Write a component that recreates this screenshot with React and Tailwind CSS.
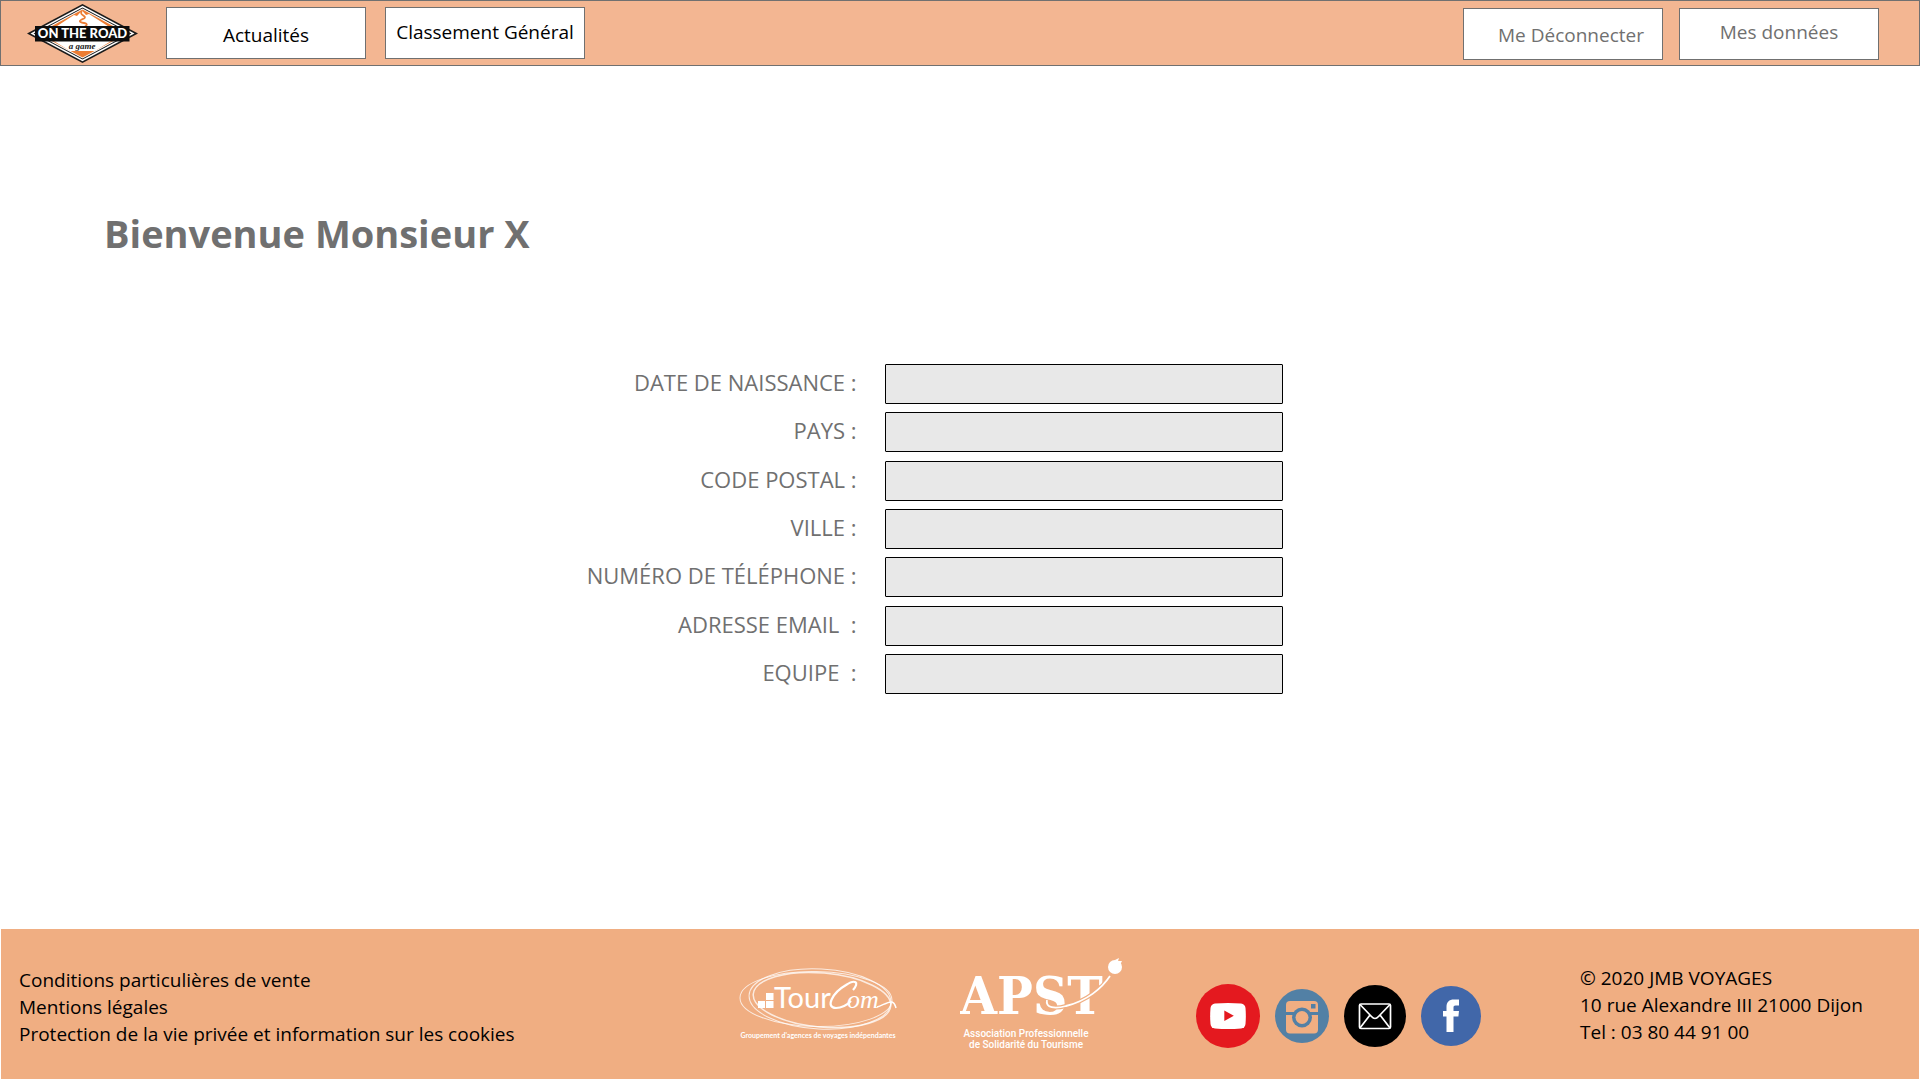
const FIELDS = [
  { id: "birth", label: "DATE DE NAISSANCE :" },
  { id: "country", label: "PAYS :" },
  { id: "zip", label: "CODE POSTAL :" },
  { id: "city", label: "VILLE :" },
  { id: "phone", label: "NUMÉRO DE TÉLÉPHONE :" },
  { id: "email", label: "ADRESSE EMAIL\u00a0 :" },
  { id: "team", label: "EQUIPE\u00a0 :" },
];

function RoadLogo() {
  return (
    <svg width="112" height="60" viewBox="0 0 112 60" role="img" aria-label="On the road, a game">
      <polygon points="55.5,0 111,29.5 55.5,59 0,29.5" fill="#1a1a1a" />
      <polygon points="55.5,1.7 107.5,29.5 55.5,57.3 3.5,29.5" fill="#fff" />
      <polygon points="55.5,3.4 104.5,29.5 55.5,55.6 6.5,29.5" fill="#1a1a1a" />
      <polygon points="55.5,4.4 102.5,29.5 55.5,54.6 8.5,29.5" fill="#fff" />
      <polygon points="55.5,5.5 100,29.5 55.5,53.5 11,29.5" fill="#ec7d34" />
      <polygon points="24,26 47,11 50,12 55,6.5 59,11 62,10 87,26" fill="#fff" />
      <polygon points="22,34 89,34 68,47 43,47" fill="#fff" />
      <path d="M55 7 C51 11 61 12 57 14.500 C52 16.500 51 18 57 19 C62 20 60 22 53 25" fill="none" stroke="#ec7d34" strokeWidth="1.800" />
      <rect x="8" y="22" width="94.500" height="15.500" fill="#0c0c0c" />
      <text x="55.500" y="34" textAnchor="middle" fontFamily="Lato, sans-serif" fontWeight="900" fontSize="13" fill="#fff">ON THE ROAD</text>
      <text x="55" y="44.500" textAnchor="middle" fontFamily="'Liberation Serif', serif" fontStyle="italic" fontWeight="700" fontSize="9" fill="#1a1a1a">a game</text>
    </svg>
  );
}

function TourComLogo() {
  return (
    <svg width="160" height="76" viewBox="0 0 160 76" fill="none" role="img" aria-label="TourCom, Groupement d'agences de voyages indépendantes">
      <g stroke="#fff" strokeOpacity=".75">
        <ellipse cx="77" cy="32" rx="76" ry="27.500" transform="rotate(1 77 32)" />
        <ellipse cx="81" cy="32" rx="71" ry="30" transform="rotate(3 81 32)" />
        <ellipse cx="83" cy="33" rx="69" ry="27" transform="rotate(5 83 33)" strokeWidth="1.500" />
      </g>
      <path d="M19 34h7v7h-7zM27 34h7.500v7h-7.500zM27 26h7.500v7h-7.500z" fill="#fff" />
      <text x="35" y="41" fontFamily="Lato, sans-serif" fontSize="29" fill="#fff">Tour</text>
      <path d="M114 23 C121 15 116 12 107 18 C93 26 86 41 97 41 C103 41 108 38 112 34" stroke="#fff" strokeWidth="2.200" />
      <text x="108" y="41" fontFamily="'Liberation Serif', serif" fontStyle="italic" fontSize="26" fill="#fff">om</text>
      <path d="M138 40 C143 39 149 34 153 35 C156 36 156 38 157 41" stroke="#fff" strokeWidth="1.500" />
      <text x="79" y="71" textAnchor="middle" fontFamily="Lato, sans-serif" fontWeight="700" fontSize="7" fill="#fff">Groupement d'agences de voyages indépendantes</text>
    </svg>
  );
}

function ApstLogo() {
  return (
    <svg width="164" height="94" viewBox="0 0 164 94" fill="#fff" role="img" aria-label="APST, Association Professionnelle de Solidarité du Tourisme">
      <text x="0" y="57" fontFamily="'DejaVu Serif Condensed', 'DejaVu Serif', serif" fontWeight="700" fontSize="53">APST</text>
      <path d="M87 43 C85 51 95 52 106 49 C127 44 142 31 150 19" fill="none" stroke="#f0ae82" strokeWidth="4" />
      <path d="M87 43 C85 51 95 52 106 49 C127 44 142 31 150 19" fill="none" stroke="#fff" strokeWidth="1.800" />
      <circle cx="155" cy="10" r="7" />
      <path d="M155 3l4-2-1 3 4 0-2 4z" />
      <text x="66" y="80" textAnchor="middle" fontFamily="Roboto, sans-serif" fontWeight="500" fontSize="10">Association Professionnelle</text>
      <text x="66" y="91" textAnchor="middle" fontFamily="Roboto, sans-serif" fontWeight="500" fontSize="10">de Solidarité du Tourisme</text>
    </svg>
  );
}

function YoutubeIcon() {
  return (
    <svg width="64" height="64" viewBox="0 0 64 64">
      <circle cx="32" cy="32" r="32" fill="#e4191f" />
      <path d="M19 19.500 Q32 18.500 45 19.500 Q49 20 49.500 24 Q50.200 32 49.500 40 Q49 44 45 44.500 Q32 45.500 19 44.500 Q15 44 14.500 40 Q13.800 32 14.500 24 Q15 20 19 19.500Z" fill="#fff" />
      <path d="M28.300 26.500v10.500l9.500-5.200z" fill="#e4191f" />
    </svg>
  );
}

function InstagramIcon() {
  return (
    <svg width="54" height="54" viewBox="0 0 54 54">
      <circle cx="27" cy="27" r="27" fill="#5280a5" />
      <rect x="11" y="12" width="32" height="32.500" rx="4" fill="#f0ae82" />
      <path d="M11 24.500h32" stroke="#5280a5" strokeWidth="3" />
      <circle cx="27" cy="28.500" r="10" fill="#5280a5" />
      <circle cx="27" cy="28.500" r="6.500" fill="#f0ae82" />
      <rect x="36" y="15" width="4.500" height="4.500" fill="#5280a5" />
    </svg>
  );
}

function MailIcon() {
  return (
    <svg width="62" height="62" viewBox="0 0 62 62">
      <circle cx="31" cy="31" r="31" fill="#000" />
      <g fill="none" stroke="#fff" strokeWidth="1.700" strokeLinejoin="round">
        <rect x="15.500" y="19" width="31" height="24.500" rx="1.500" />
        <path d="M16 19.500 L27.500 31.500 Q31 35.500 34.500 31.500 L46 19.500M16 43 L26 30M46 43 L36 30" />
      </g>
    </svg>
  );
}

function FacebookIcon() {
  return (
    <svg width="60" height="60" viewBox="0 0 60 60">
      <circle cx="30" cy="30" r="30" fill="#4167a9" />
      <path d="M25.500 46V30.500H22V25h3.500v-4c0-5 2.500-7.500 7.500-7.500h5v6h-3.500c-1.500 0-2 .7-2 2V25h5.500l-.6 5.500h-4.900V46z" fill="#fff" />
    </svg>
  );
}

const SOCIALS = [
  { name: "YouTube", Icon: YoutubeIcon },
  { name: "Instagram", Icon: InstagramIcon },
  { name: "E-mail", Icon: MailIcon },
  { name: "Facebook", Icon: FacebookIcon },
];

const navButton = "flex h-[52px] w-[200px] items-center justify-center border border-[#707070] bg-white whitespace-nowrap";

export default function App() {
  return (
    <div className="flex min-h-screen flex-col bg-white font-['Open_Sans',sans-serif] text-[19px] leading-[27px] text-black">
      <header className="flex items-start justify-between border border-[#707070] bg-[#f3b692] pt-[6px] pr-10 pb-[5px] pl-[26px]">
        <nav className="flex items-start">
          <a href="#accueil" className="-mt-[3px] mr-[27px] -mb-1 block">
            <RoadLogo />
          </a>
          <div className="flex gap-[19px]">
            <button type="button" className={`${navButton} pt-1`}>Actualités</button>
            <button type="button" className={`${navButton} pb-0.5`}>Classement Général</button>
          </div>
        </nav>
        <div className="mt-px flex gap-4 text-[#707070]">
          <button type="button" className={`${navButton} pt-0.5 pl-4`}>Me Déconnecter</button>
          <button type="button" className={`${navButton} pb-1`}>Mes données</button>
        </div>
      </header>

      <main className="flex-1">
        <h1 className="mt-[140px] ml-[104px] text-[38px] leading-[54px] font-bold text-[#707070]">Bienvenue Monsieur X</h1>
        <form className="mt-[104px] grid min-h-[330px] grid-cols-[1fr_398px] content-between gap-x-7 pr-[33.2%] text-[22px] leading-[30px] text-[#707070]">
          {FIELDS.map(({ id, label }) => (
            <div key={id} className="col-span-2 grid grid-cols-subgrid items-center">
              <label htmlFor={id} className="pb-1 text-right">{label}</label>
              <input id={id} type="text" className="h-10 w-full rounded-[1px] border border-black bg-[#e8e8e8] px-2" />
            </div>
          ))}
        </form>
      </main>

      <footer className="mx-px mb-px grid min-h-[150px] grid-cols-[738fr_221fr_236fr_384fr_339fr] items-start bg-[#f0ae82]">
        <ul className="mt-[38px] pl-[18px]">
          <li><a href="#conditions">Conditions particulières de vente</a></li>
          <li><a href="#mentions">Mentions légales</a></li>
          <li><a href="#confidentialite">Protection de la vie privée et information sur les cookies</a></li>
        </ul>
        <div className="mt-[38px]"><TourComLogo /></div>
        <div className="mt-7"><ApstLogo /></div>
        <div className="mt-[55px] flex items-center gap-[15px]">
          {SOCIALS.map(({ name, Icon }) => (
            <a key={name} href={`#${name.toLowerCase()}`} aria-label={name}><Icon /></a>
          ))}
        </div>
        <address className="mt-9 whitespace-nowrap not-italic">
          © 2020 JMB VOYAGES<br />
          10 rue Alexandre III 21000 Dijon<br />
          Tel : 03 80 44 91 00
        </address>
      </footer>
    </div>
  );
}
